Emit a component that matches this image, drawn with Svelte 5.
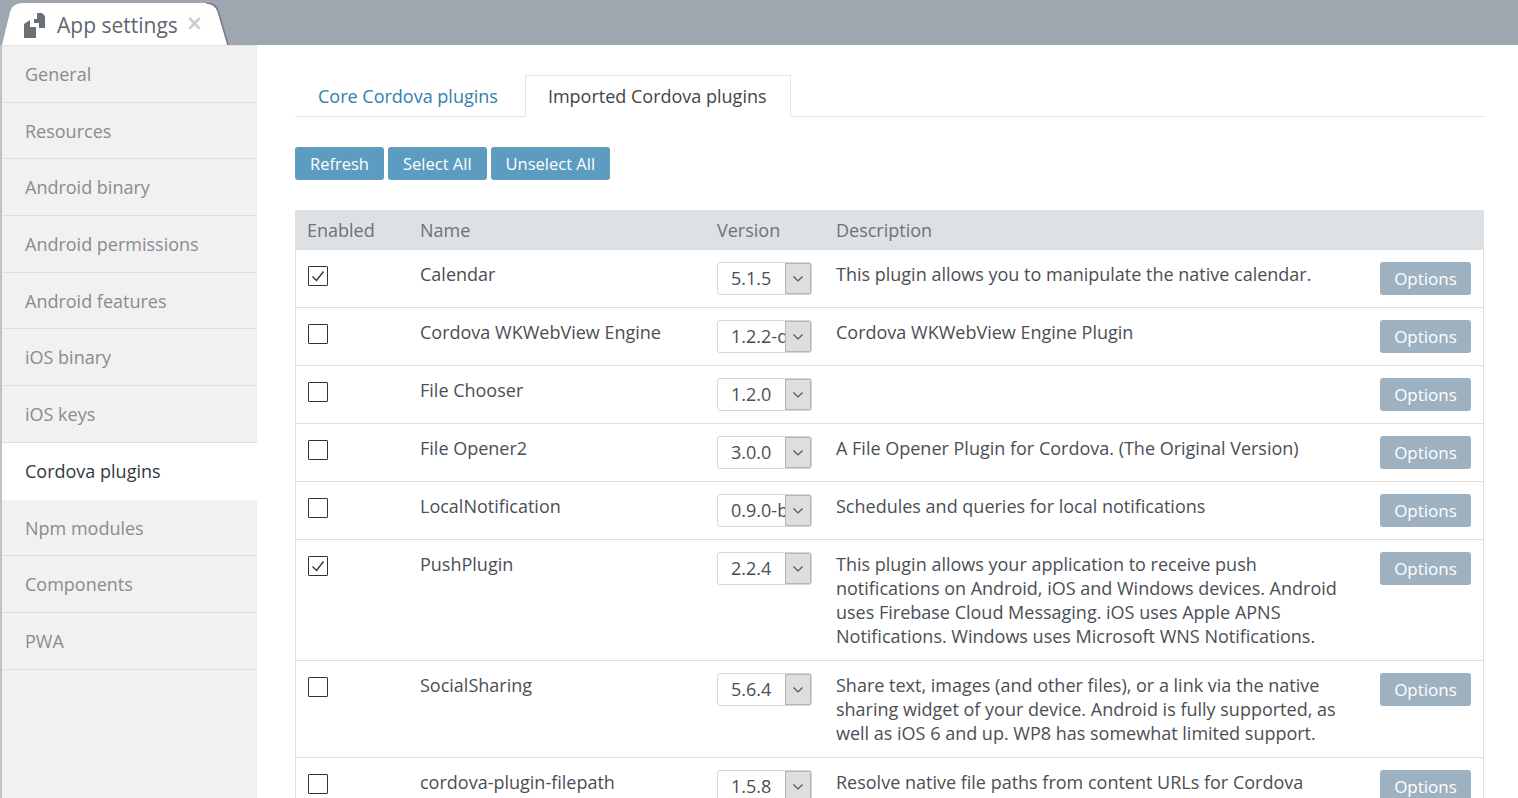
<script>
	const nav = ['General', 'Resources', 'Android binary', 'Android permissions', 'Android features', 'iOS binary', 'iOS keys', 'Cordova plugins', 'Npm modules', 'Components', 'PWA'];
	const plugins = [
		{ name: 'Calendar', version: '5.1.5', on: true, desc: 'This plugin allows you to manipulate the native calendar.' },
		{ name: 'Cordova WKWebView Engine', version: '1.2.2-dev', desc: 'Cordova WKWebView Engine Plugin' },
		{ name: 'File Chooser', version: '1.2.0', desc: '' },
		{ name: 'File Opener2', version: '3.0.0', desc: 'A File Opener Plugin for Cordova. (The Original Version)' },
		{ name: 'LocalNotification', version: '0.9.0-beta', desc: 'Schedules and queries for local notifications' },
		{ name: 'PushPlugin', version: '2.2.4', on: true, desc: 'This plugin allows your application to receive push notifications on Android, iOS and Windows devices. Android uses Firebase Cloud Messaging. iOS uses Apple APNS Notifications. Windows uses Microsoft WNS Notifications.' },
		{ name: 'SocialSharing', version: '5.6.4', desc: 'Share text, images (and other files), or a link via the native sharing widget of your device. Android is fully supported, as well as iOS 6 and up. WP8 has somewhat limited support.' },
		{ name: 'cordova-plugin-filepath', version: '1.5.8', desc: 'Resolve native file paths from content URLs for Cordova platforms' }
	];
</script>

<div class="page">
	<header class="topbar">
		<div class="tab">
			<svg class="tab-shape" width="232" height="42" viewBox="0 0 232 42">
				<path d="M0 42 L8 9 Q10 0 22 0 L204 0 Q213 0 216 8 L226 42 Z" fill="#fff" />
				<path d="M204 0 Q213 0 216 8 L226 42" fill="none" stroke="#717a82" stroke-width="1.5" />
			</svg>
			<svg class="tab-icon" width="22" height="25" viewBox="0 0 22 25">
				<path d="M0 11 L6 7 L6 14 L12 14 L12 25 L0 25 Z" fill="#6b7077" />
				<path d="M13 0 L18 0 L21 3 L21 15 L15 15 L15 10 L10 10 L10 6 L13 6 Z" fill="#6b7077" />
			</svg>
			<span class="tab-label">App settings</span>
			<span class="tab-close">×</span>
		</div>
	</header>
	<div class="body">
		<nav class="side">
			{#each nav as item}
				<div class="nav-item" class:active={item === 'Cordova plugins'}>{item}</div>
			{/each}
		</nav>
		<main class="content">
			<div class="tabs">
				<span class="sub-tab">Core Cordova plugins</span>
				<span class="sub-tab current">Imported Cordova plugins</span>
			</div>
			<div class="actions">
				<button class="btn">Refresh</button>
				<button class="btn">Select All</button>
				<button class="btn">Unselect All</button>
			</div>
			<table>
				<colgroup>
					<col style="width: 113px" />
					<col style="width: 297px" />
					<col style="width: 119px" />
					<col style="width: 544px" />
					<col style="width: 116px" />
				</colgroup>
				<thead>
					<tr>
						<th>Enabled</th>
						<th>Name</th>
						<th>Version</th>
						<th>Description</th>
						<th></th>
					</tr>
				</thead>
				<tbody>
					{#each plugins as p}
						<tr>
							<td>
								<span class="check">
									{#if p.on}
										<svg width="18" height="18" viewBox="0 0 18 18"><path d="M3.5 9.5 L7.5 13.5 L14.5 4.5" fill="none" stroke="#333" stroke-width="1.4" /></svg>
									{/if}
								</span>
							</td>
							<td>{p.name}</td>
							<td>
								<div class="select">
									<span class="value">{p.version}</span>
									<span class="arrow">
										<svg width="12" height="8" viewBox="0 0 12 8"><path d="M1.5 1.5 L6 6 L10.5 1.5" fill="none" stroke="#555" stroke-width="1.2" /></svg>
									</span>
								</div>
							</td>
							<td>{p.desc}</td>
							<td><button class="options">Options</button></td>
						</tr>
					{/each}
				</tbody>
			</table>
		</main>
	</div>
</div>

<style>
	:global(body) {
		margin: 0;
		overflow: hidden;
		background: #fff;
	}

	.page {
		height: 798px;
		overflow: hidden;
		font-family: "Open Sans", sans-serif;
		font-size: 18px;
		line-height: 24px;
		color: #4a4f55;
	}

	.topbar {
		height: 45px;
		background: #9ea7af;
		display: flex;
		align-items: flex-end;
		box-sizing: border-box;
		padding-left: 2px;
	}

	.tab {
		position: relative;
		width: 232px;
		height: 42px;
		display: flex;
		align-items: center;
		box-sizing: border-box;
		padding-left: 22px;
	}

	.tab-shape {
		position: absolute;
		left: 0;
		top: 0;
	}

	.tab-icon {
		position: relative;
		margin-right: 11px;
		margin-top: 3px;
	}

	.tab-label {
		position: relative;
		font-size: 21px;
		color: #5f666e;
		margin-top: 2px;
	}

	.tab-close {
		position: relative;
		font-size: 27px;
		font-weight: 600;
		color: #c9ccd0;
		margin-left: 9px;
		margin-top: -3px;
	}

	.body {
		display: flex;
		height: 753px;
		border-left: 2px solid #bac4ce;
	}

	.side {
		width: 255px;
		flex: none;
		background: #f1f1f1;
		border-top: 1px solid #e2e2e2;
		box-sizing: border-box;
	}

	.nav-item {
		height: 56.7px;
		box-sizing: border-box;
		padding: 16px 23px 0;
		border-bottom: 1px solid #dedede;
		color: #888c91;
	}

	.nav-item.active {
		background: #fff;
		color: #33383d;
		border-bottom-color: #fff;
	}

	.content {
		flex: 1;
		padding: 30px 34px 0 38px;
		min-width: 0;
	}

	.tabs {
		display: flex;
		height: 41px;
		border-bottom: 1px solid #e4e4e4;
	}

	.sub-tab {
		padding: 9px 23px;
		color: #2f7fb0;
		height: 41px;
		box-sizing: border-box;
		margin-right: 4px;
	}

	.sub-tab.current {
		color: #444;
		border: 1px solid #e4e4e4;
		border-bottom-color: #fff;
		height: 42px;
		background: #fff;
		padding: 8px 22px;
		width: 266px;
		white-space: nowrap;
	}

	.actions {
		display: flex;
		gap: 4px;
		margin-top: 30px;
	}

	.btn {
		font: inherit;
		font-size: 16.5px;
		height: 33px;
		padding: 0 15px;
		border: 0;
		border-radius: 3px;
		background: #5b9cc0;
		color: #fff;
	}

	table {
		table-layout: fixed;
		width: 1189px;
		border-collapse: separate;
		border-spacing: 0;
		margin-top: 30px;
	}

	th {
		height: 40px;
		padding: 0 12px;
		background: #dde1e4;
		color: #6c7379;
		font-weight: 400;
		text-align: left;
	}

	td {
		padding: 12px;
		vertical-align: top;
		border-bottom: 1px solid #e0e0e0;
	}

	td:first-child {
		border-left: 1px solid #e0e0e0;
		padding-left: 11px;
	}

	td:last-child {
		border-right: 1px solid #e0e0e0;
	}

	.check {
		display: block;
		width: 18px;
		height: 18px;
		border: 1px solid #333;
		border-radius: 1px;
		margin: 4px 0 0 1px;
	}

	.check svg {
		display: block;
	}

	.select {
		display: flex;
		width: 95px;
		height: 33px;
		box-sizing: border-box;
		border: 1px solid #d6d6d6;
		border-radius: 3px;
		overflow: hidden;
	}

	.value {
		flex: 1;
		min-width: 0;
		padding: 3px 0 0 13px;
		white-space: nowrap;
		overflow: hidden;
	}

	.arrow {
		flex: none;
		width: 26px;
		background: #dedede;
		border: 1px solid #b5b5b5;
		box-sizing: border-box;
		display: flex;
		align-items: center;
		justify-content: center;
	}

	.options {
		font: inherit;
		font-size: 17px;
		width: 91px;
		height: 33px;
		padding: 0;
		border: 0;
		border-radius: 3px;
		background: #9db1c1;
		color: #fff;
	}
</style>
